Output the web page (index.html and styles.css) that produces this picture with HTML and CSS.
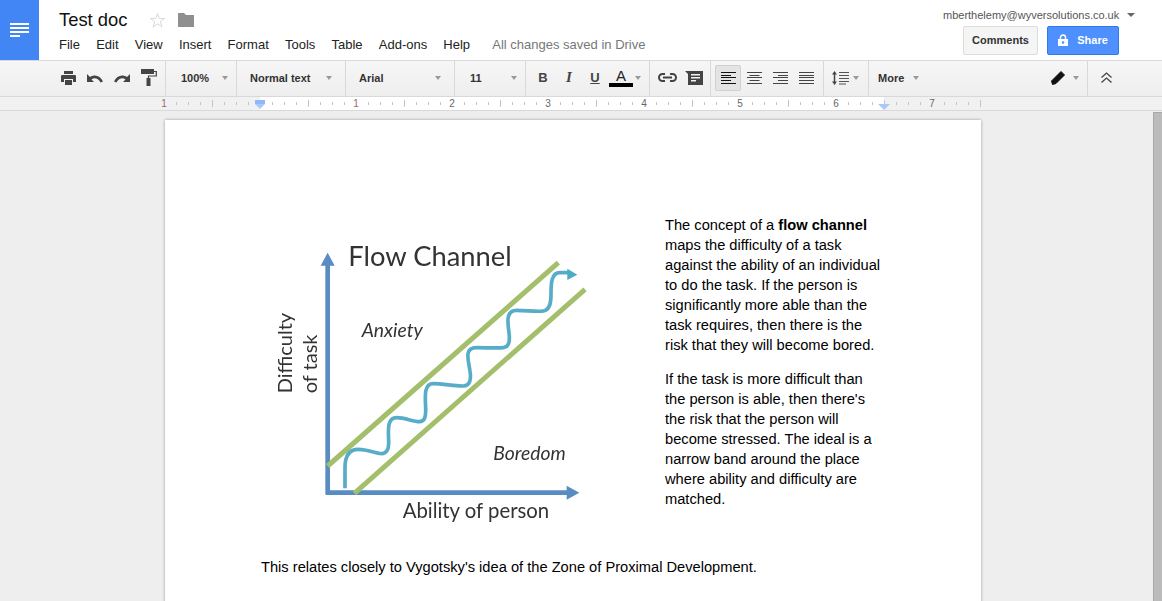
FILE: index.html
```html
<!DOCTYPE html>
<html lang="en">
<head>
  <meta charset="UTF-8">
  <title>Test doc - Google Docs</title>
  <link rel="stylesheet" href="styles.css">
</head>
<body>
  <header class="topbar">
    <div class="logo">
      <svg width="19" height="14" viewBox="0 0 19 14"><path d="M0 0h19v2H0zM0 4h19v2H0zM0 8h19v2H0zM0 12h10v2H0z" fill="#fff"/></svg>
    </div>
    <div class="titlearea">
      <div class="titlerow">
        <span class="doctitle">Test doc</span>
        <svg class="star" width="17" height="17" viewBox="0 0 17 17"><path d="M8.5 1.5l1.8 5h5.2l-4.2 3.2 1.6 5.3-4.4-3.2L4.100 15l1.600-5.300L1.500 6.500h5.200z" fill="#fff" stroke="#d9d9d9"/></svg>
        <svg class="folder" width="16" height="14" viewBox="0 0 16 14"><path d="M0 0h6l2 2h8v12H0z" fill="#8f8f8f"/></svg>
      </div>
      <nav class="menu">
        <span>File</span><span>Edit</span><span>View</span><span>Insert</span><span>Format</span><span>Tools</span><span>Table</span><span>Add-ons</span><span>Help</span>
        <span class="saved">All changes saved in Drive</span>
      </nav>
    </div>
    <div class="account">
      <div class="email">mberthelemy@wyversolutions.co.uk <i class="caret caret-dark"></i></div>
      <div class="buttons">
        <button class="btn">Comments</button>
        <button class="btn btn-share">
          <svg width="10" height="12" viewBox="0 0 10 12"><path d="M2.500 5V3.500a2.500 2.500 0 0 1 5 0V5" fill="none" stroke="#fff" stroke-width="1.500"/><path d="M0 5h10v7H0z" fill="#fff"/><circle cx="5" cy="8.500" r="1.300" fill="#4d90fe"/></svg>
          Share
        </button>
      </div>
    </div>
  </header>

  <div class="toolbar">
    <div class="group g-history">
      <svg width="15" height="14" viewBox="0 0 15 14"><path d="M3 0h9v3H3zM1 4h13a1 1 0 0 1 1 1v6h-3V8H3v3H0V5a1 1 0 0 1 1-1zM4 9h7v5H4z" fill="#444"/></svg>
      <svg width="16" height="10" viewBox="0 0 16 10"><path d="M0 1v8h7L4.500 6.500C7 4.500 11 4.800 13.500 9.500L16 8.500C13.500 2.500 7.500 1 3 4z" fill="#444"/></svg>
      <svg width="16" height="10" viewBox="0 0 16 10"><path d="M16 1v8H9l2.500-2.500C9 4.500 5 4.800 2.500 9.500L0 8.500C2.500 2.500 8.500 1 13 4z" fill="#444"/></svg>
      <svg width="16" height="17" viewBox="0 0 16 17"><path d="M0 0h13v5H0z" fill="#444"/><path d="M13 2.500h2.300v4.500H7.500v3" fill="none" stroke="#444" stroke-width="1.200"/><path d="M5.500 9h4v8h-4z" fill="#444"/></svg>
    </div>
    <div class="group g-zoom"><b>100%</b><i class="caret"></i></div>
    <div class="group g-style"><b>Normal text</b><i class="caret"></i></div>
    <div class="group g-font"><b>Arial</b><i class="caret"></i></div>
    <div class="group g-size"><b>11</b><i class="caret"></i></div>
    <div class="group g-format">
      <span class="fmt fmt-b">B</span>
      <span class="fmt fmt-i">I</span>
      <span class="fmt fmt-u">U</span>
      <span class="fmt fmt-a">A</span>
      <i class="caret"></i>
    </div>
    <div class="group g-insert">
      <svg width="19" height="9" viewBox="0 0 19 9"><path d="M7 1H4.500a3.500 3.500 0 0 0 0 7H7M12 1h2.500a3.500 3.500 0 0 1 0 7H12M5 4.500h9" fill="none" stroke="#444" stroke-width="2"/></svg>
      <svg width="18" height="14" viewBox="0 0 18 14"><path d="M0 0h18v14H3V3z" fill="#444"/><path d="M6 3h9v1.500H6zM6 6h9v1.500H6zM6 9h5v1.500H6z" fill="#f3f3f3"/></svg>
    </div>
    <div class="group g-align">
      <span class="alignbtn alignbtn-on"><svg width="15" height="12" viewBox="0 0 15 12"><path d="M0 .5h15M0 3.500h10M0 5.500h15M0 8.500h10M0 11.500h15" stroke="#111"/></svg></span>
      <span class="alignbtn"><svg width="15" height="12" viewBox="0 0 15 12"><path d="M0 .5h15M2.500 3.500h10M0 5.500h15M2.500 8.500h10M0 11.500h15" stroke="#444"/></svg></span>
      <span class="alignbtn"><svg width="15" height="12" viewBox="0 0 15 12"><path d="M0 .5h15M5 3.500h10M0 5.500h15M5 8.500h10M0 11.500h15" stroke="#444"/></svg></span>
      <span class="alignbtn"><svg width="15" height="12" viewBox="0 0 15 12"><path d="M0 .5h15M0 3.500h15M0 5.500h15M0 8.500h15M0 11.500h15" stroke="#444"/></svg></span>
    </div>
    <div class="group g-spacing">
      <svg width="17" height="14" viewBox="0 0 17 14"><path d="M2.500 3v8" stroke="#444" stroke-width="1.500"/><path d="M2.500 0L5 3.500H0zM2.500 14L5 10.500H0z" fill="#444"/><path d="M7 1.500h10M7 4.500h10M7 7.500h10M7 10.500h10M7 13h7" stroke="#555"/></svg>
      <i class="caret"></i>
    </div>
    <div class="group g-more"><b>More</b><i class="caret"></i></div>
    <div class="group g-edit">
      <svg width="14" height="14" viewBox="0 0 14 14"><path d="M10 0.500l3.500 3.500L5 12.500 1.500 13.500 0.500 10z" fill="#111" stroke="#111" stroke-linejoin="round"/></svg>
      <i class="caret"></i>
    </div>
    <div class="group g-collapse">
      <svg width="11" height="11" viewBox="0 0 11 11"><path d="M.5 5.500l5-4.500 5 4.500M.5 10.500l5-4.500 5 4.500" fill="none" stroke="#444" stroke-width="1.300"/></svg>
    </div>
  </div>

  <div class="rulerbar">
    <svg class="ruler" width="1162" height="13" viewBox="0 0 1162 13">
      <rect x="260" width="624" height="13" fill="#fff"/>
      <g id="ticks" stroke="#c4c4c4"></g>
      <g class="rulernums">
        <text x="164" y="10" fill="#a0656d">1</text>
        <text x="356" y="10" fill="#a0656d">1</text>
        <text x="452" y="10">2</text>
        <text x="548" y="10">3</text>
        <text x="644" y="10">4</text>
        <text x="740" y="10">5</text>
        <text x="836" y="10">6</text>
        <text x="932" y="10">7</text>
      </g>
      <path d="M255 3h10v4l-5 5-5-5z" fill="#a9c8fb"/>
      <path d="M255 3h10v4h-10z" fill="#8fb8fa"/>
      <path d="M878 7h12l-6 6z" fill="#a9c8fb"/>
    </svg>
  </div>

  <main class="workspace">
    <article class="page">
      <div class="columns">
        <svg class="figure" width="340" height="300" viewBox="0 0 1020 900">
          <g class="fig-text">
            <text x="265" y="105" font-size="82">Flow Channel</text>
            <text x="305" y="318" font-size="58" font-style="italic">Anxiety</text>
            <text x="700" y="687" font-size="58" font-style="italic">Boredom</text>
            <text x="428" y="860" font-size="61">Ability of person</text>
            <text transform="translate(97 487) rotate(-90)" font-size="60">Difficulty</text>
            <text transform="translate(172 487) rotate(-90)" font-size="60">of task</text>
          </g>
          <path d="M203 790V100M197 785H925" fill="none" stroke="#5a8cc4" stroke-width="14"/>
          <path d="M203 65L224 104H182zM958 785L920 764V806z" fill="#5a8cc4"/>
          <path d="M203 705L895 95M283 787L975 175" fill="none" stroke="#a3bf6c" stroke-width="15"/>
          <path d="M255 772V710C255 670 270 655 295 655C325 655 345 668 365 668C380 668 387 655 386 630C385 600 380 560 410 560C435 560 460 572 478 572C495 572 498 555 497 530C496 500 490 458 520 458C550 458 585 466 610 465C630 464 634 445 630 420C626 390 610 350 650 350C680 350 710 352 730 350C748 348 750 330 747 305C744 280 735 238 770 238C800 238 830 243 850 240C870 237 873 215 873 190C873 160 873 125 900 125H925" fill="none" stroke="#57acc8" stroke-width="11"/>
          <path d="M952 131L922 113V147z" fill="#4bacc6"/>
        </svg>
        <div class="sidetext">
          <p>The concept of a <strong>flow channel</strong> maps the difficulty of a task against the ability of an individual to do the task. If the person is significantly more able than the task requires, then there is the risk that they will become bored.</p>
          <p>If the task is more difficult than the person is able, then there's the risk that the person will become stressed. The ideal is a narrow band around the place where ability and difficulty are matched.</p>
        </div>
      </div>
      <p class="closing">This relates closely to Vygotsky's idea of the Zone of Proximal Development.</p>
    </article>
    <div class="scrollthumb"></div>
  </main>

  <script>
    // ruler ticks, every 12px, longer each half inch
    const ticks = document.getElementById("ticks");
    for (let x = 176; x <= 980; x += 12) {
      if ((x - 164) % 96 === 0) continue;
      const major = (x - 212) % 96 === 0;
      const line = document.createElementNS("http://www.w3.org/2000/svg", "line");
      line.setAttribute("x1", x + 0.5);
      line.setAttribute("x2", x + 0.5);
      line.setAttribute("y1", major ? 3 : 5);
      line.setAttribute("y2", major ? 10 : 8);
      ticks.appendChild(line);
    }
  </script>
</body>
</html>
```

FILE: styles.css
```css
* {
  box-sizing: border-box;
}

html, body {
  height: 100%;
}

body {
  margin: 0;
  overflow: hidden;
  display: flex;
  flex-direction: column;
  font-family: "Liberation Sans", Arial, sans-serif;
  background: #eee;
  color: #222;
}

/* top bar */
.topbar {
  display: flex;
  height: 60px;
  background: #fff;
  flex: none;
}

.logo {
  width: 39px;
  height: 60px;
  background: #4285f4;
  display: flex;
  align-items: center;
  justify-content: center;
}

.titlearea {
  margin-left: 20px;
  flex: 1;
}

.titlerow {
  display: flex;
  align-items: center;
  height: 24px;
  margin-top: 8px;
}

.doctitle {
  font-size: 18.4px;
  color: #111;
}

.star {
  margin-left: 21px;
}

.folder {
  margin-left: 12px;
}

.menu {
  display: flex;
  gap: 16.2px;
  margin-top: 5px;
  font-size: 13px;
  line-height: 16px;
  color: #222;
}

.menu .saved {
  margin-left: 6px;
  color: #777;
}

.account {
  width: 219px;
  padding-top: 8px;
}

.email {
  font-size: 11px;
  line-height: 14px;
  color: #555;
  white-space: nowrap;
}

.buttons {
  display: flex;
  gap: 9px;
  margin-top: 4px;
  margin-left: 20px;
}

.btn {
  height: 29px;
  width: 75px;
  padding: 0 0 2px;
  border: 1px solid #dcdcdc;
  border-radius: 2px;
  background: #f5f5f5;
  font: bold 11px "Liberation Sans", Arial, sans-serif;
  color: #333;
}

.btn-share {
  width: 72px;
  background: #4d90fe;
  border-color: #3079ed;
  color: #fff;
}

.btn-share svg {
  margin-right: 6px;
  vertical-align: -2px;
}

.caret {
  display: inline-block;
  width: 0;
  height: 0;
  border: 3.500px solid transparent;
  border-bottom: 0;
  border-top: 4px solid #999;
}

.caret-dark {
  margin-left: 5px;
  border-top-color: #666;
  border-left-width: 4px;
  border-right-width: 4px;
  vertical-align: 2px;
}

/* toolbar */
.toolbar {
  display: flex;
  height: 37px;
  flex: none;
  border-top: 1px solid #d9d9d9;
  border-bottom: 1px solid #d9d9d9;
  background: linear-gradient(#f6f6f6, #eeeeee);
}

.group {
  display: flex;
  align-items: center;
  border-right: 1px solid #d9d9d9;
  font-size: 11px;
  color: #333;
  padding-bottom: 2px;
}

.group b {
  flex: 1;
}

.g-history {
  width: 166px;
  padding-left: 61px;
  gap: 11px;
}

.g-zoom {
  width: 71px;
  padding-left: 15px;
  padding-right: 8px;
}

.g-style {
  width: 109px;
  padding-left: 13px;
  padding-right: 13px;
}

.g-font {
  width: 109px;
  padding-left: 13px;
  padding-right: 13px;
}

.g-size {
  width: 71px;
  padding-left: 15px;
  padding-right: 8px;
}

.g-format {
  width: 124px;
  padding-left: 4px;
}

.fmt {
  width: 26px;
  text-align: center;
  font-size: 13px;
  color: #444;
}

.fmt-b {
  font-weight: bold;
}

.fmt-i {
  font-family: "Liberation Serif", serif;
  font-style: italic;
  font-weight: bold;
  font-size: 15px;
}

.fmt-u {
  text-decoration: underline;
  font-weight: bold;
}

.fmt-a {
  width: 24px;
  margin-left: 1px;
  margin-right: 2px;
  font-size: 15px;
  line-height: 14px;
  color: #222;
  border-bottom: 4px solid #000;
}

.g-insert {
  width: 61px;
  padding-left: 8px;
  gap: 8px;
}

.g-align {
  width: 113px;
  padding-left: 4px;
}

.alignbtn {
  width: 26px;
  height: 26px;
  display: flex;
  align-items: center;
  justify-content: center;
}

.alignbtn-on {
  background: #e4e4e4;
  border: 1px solid #d0d0d0;
  border-radius: 2px;
}

.g-spacing {
  width: 45px;
  padding-left: 8px;
  gap: 4px;
}

.g-more {
  width: 181px;
  padding-left: 9px;
  gap: 9px;
  border-right: 0;
}

.g-more b {
  flex: none;
}

.g-edit {
  width: 38px;
  gap: 8px;
}

.g-edit svg {
  margin-left: 1px;
}

.g-collapse {
  border: 0;
  padding-left: 13px;
  border-left: 1px solid #d9d9d9;
  margin-left: -1px;
}

/* ruler */
.rulerbar {
  height: 14px;
  flex: none;
  background: #f1f1f1;
  border-bottom: 1px solid #d9d9d9;
}

.ruler {
  display: block;
}

.rulernums text {
  font-size: 10px;
  fill: #666;
  text-anchor: middle;
}

.rulernums text[fill] {
  fill: #a0656d;
}

/* document */
.workspace {
  flex: 1;
  position: relative;
  padding: 9px 0 0 165px;
  min-height: 0;
  overflow: hidden;
}

.page {
  width: 816px;
  height: 700px;
  background: #fff;
  box-shadow: 0 0 3px rgba(0, 0, 0, 0.35);
  padding: 95px 96px 0 96px;
  font-size: 14.67px;
  line-height: 20px;
  color: #000;
}

.columns {
  display: flex;
  height: 342px;
}

.figure {
  flex: none;
  margin-top: 16px;
  margin-left: -1px;
  filter: blur(0.3px);
}

.fig-text text {
  font-family: Lato, "Open Sans", sans-serif;
  fill: #333;
}

.sidetext {
  width: 225px;
  margin-left: 65px;
}

.sidetext p {
  margin: 0 0 14px;
}

.closing {
  margin: 0;
}

.scrollthumb {
  position: absolute;
  top: 1px;
  right: 0;
  bottom: 0;
  width: 9px;
  background: #bbb;
  border-left: 1px solid #a8a8a8;
  border-top: 1px solid #a8a8a8;
}
```
